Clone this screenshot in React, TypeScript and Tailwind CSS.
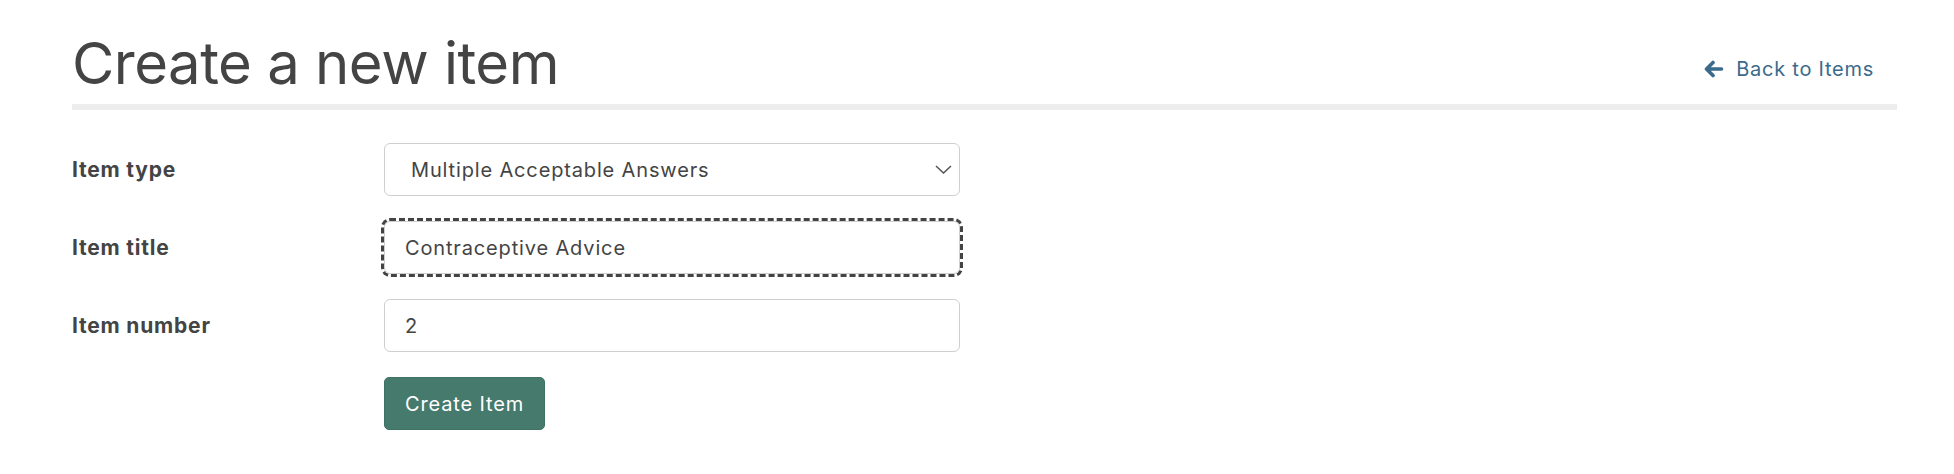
const labelClass = "text-[21px] font-bold tracking-[0.8px] text-[#444]";
const fieldClass =
  "h-[53px] w-[576px] rounded-[6px] border border-[#cfcfcf] bg-white px-[20px] text-[20px] tracking-[0.85px] text-[#444]";

function ArrowLeftIcon() {
  return (
    <svg className="h-[18px] w-[20px]" viewBox="0 0 20 18" fill="none">
      <path
        d="M9 2.5L2.5 9L9 15.5M3 9H17.5"
        stroke="currentColor"
        strokeWidth="3.6"
        strokeLinecap="round"
        strokeLinejoin="round"
      />
    </svg>
  );
}

export default function App() {
  return (
    <div className="min-h-[474px] bg-white pl-[72px] pr-[57px] font-['Inter',sans-serif] text-[#444]">
      {/* page header */}
      <div className="flex items-start justify-between pt-[27px]">
        <h1 className="text-[58px] font-normal leading-[72px] tracking-[-0.5px] text-[#444]">
          Create a new item
        </h1>
        <a
          href="#"
          className="mr-[23px] mt-[28px] flex items-center gap-[12px] text-[20px] leading-[28px] tracking-[0.75px] text-[#3b6b8c]"
        >
          <ArrowLeftIcon />
          Back to Items
        </a>
      </div>
      <div className="mt-[5px] h-[6px] bg-[#ededed]" />

      {/* form */}
      <form className="mt-[33px] grid grid-cols-[312px_576px] items-center gap-y-[25px]">
        <label className={labelClass}>Item type</label>
        <div className="relative">
          <select
            className={fieldClass + " appearance-none pl-[26px]"}
            defaultValue="multiple"
          >
            <option value="multiple">Multiple Acceptable Answers</option>
            <option value="single">Single Answer</option>
          </select>
          <svg
            className="pointer-events-none absolute right-[8px] top-[22px] h-[9px] w-[17px]"
            viewBox="0 0 17 9"
            fill="none"
          >
            <path d="M1 1l7.5 7 7.5-7" stroke="#555" strokeWidth="1.5" />
          </svg>
        </div>

        <label className={labelClass}>Item title</label>
        <input
          type="text"
          defaultValue="Contraceptive Advice"
          className={fieldClass + " outline-[3px] outline-dashed outline-[#444]"}
        />

        <label className={labelClass}>Item number</label>
        <input type="text" defaultValue="2" className={fieldClass + " outline-none"} />

        <div />
        <div>
          <button
            type="button"
            className="h-[53px] rounded-[5px] border border-[#3f7164] bg-[#457a6d] px-[20px] text-[20px] tracking-[0.85px] text-white"
          >
            Create Item
          </button>
        </div>
      </form>
    </div>
  );
}
